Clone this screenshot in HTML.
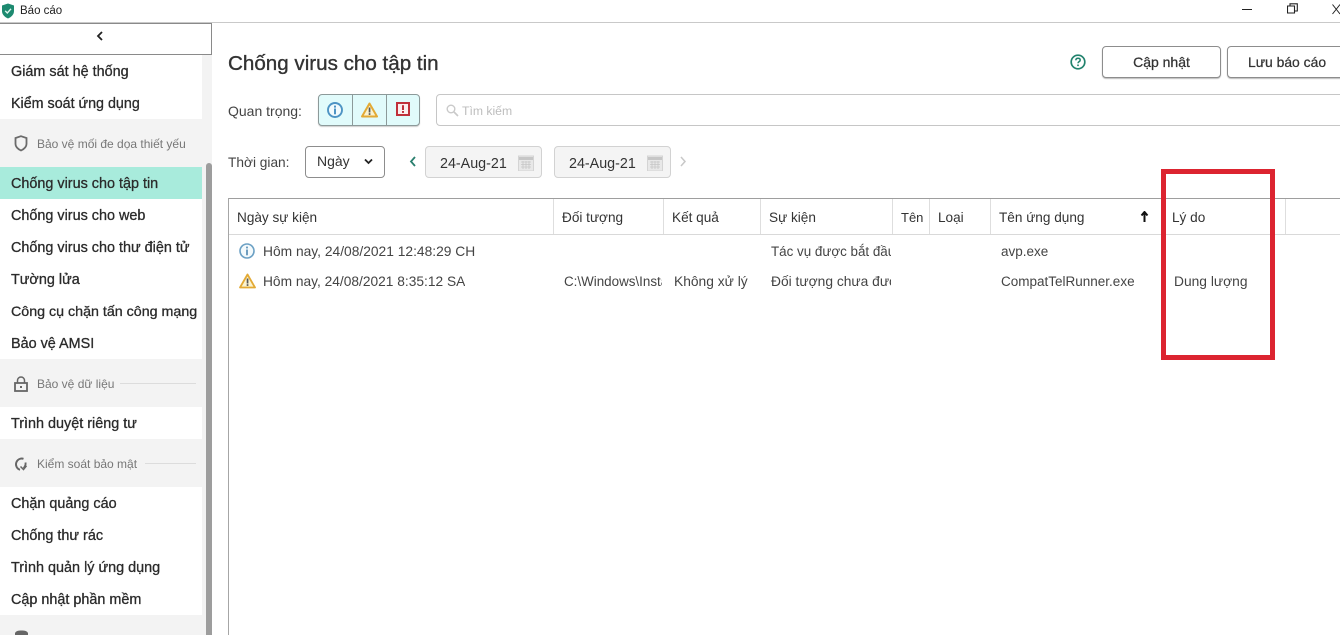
<!DOCTYPE html>
<html lang="vi">
<head>
<meta charset="utf-8">
<title>Báo cáo</title>
<style>
html,body{margin:0;padding:0;background:#fff}
body{width:1340px;height:635px;overflow:hidden;position:relative;font-family:"Liberation Sans","Noto Sans CJK SC",sans-serif;color:#2f2f2f;font-size:13.5px}
.a{position:absolute;box-sizing:border-box}
.t{position:absolute;white-space:nowrap;line-height:18px;height:18px}
.nav{font-size:14.4px;font-weight:400;color:#2b2b2b;left:11px;-webkit-text-stroke:.3px #2b2b2b}
.sec{font-size:12px;color:#777;left:37px}
.bl{background:#fff;left:0;width:202px}
.hd{font-size:13.6px;color:#333;top:209px}
.c{font-size:13.8px;color:#444;overflow:hidden}
.sep{position:absolute;top:199px;width:1px;height:35px;background:#dedede}
.btn{border:1px solid #8d8d8d;border-radius:4px;background:#fff;box-shadow:0 1px 1px #bbb}
.date{border:1px solid #d2d2d2;border-radius:4px;background:#f4f4f4}
svg{position:absolute;display:block}
</style>
</head>
<body>
<!-- title bar -->
<svg style="left:1px;top:3px" width="14" height="16" viewBox="0 0 14 16"><path d="M7 .5 13 2.500V8c0 3.600-2.600 6-6 7.500C3.600 14 1 11.600 1 8V2.500Z" fill="#1d8a70"/><path d="M4.200 7.800 6.300 10 10 5.800" fill="none" stroke="#dff5ee" stroke-width="1.400"/></svg>
<div class="t" style="left:20px;top:2px;font-size:11.5px;color:#222">Báo cáo</div>
<div class="a" style="left:1242px;top:9px;width:10px;height:1px;background:#222"></div>
<svg style="left:1287px;top:3px" width="11" height="11" viewBox="0 0 11 11"><path d="M.5 3h7v7h-7zM3 3V.8h7.300V8H7.500" fill="none" stroke="#222" stroke-width="1.100"/></svg>
<svg style="left:1332px;top:4px" width="8" height="11" viewBox="0 0 8 11"><path d="M.5 .5 8 10M8 .5 .5 10" stroke="#222" fill="none"/></svg>
<div class="a" style="left:0;top:22px;width:1340px;height:1px;background:#c9c9c9"></div>

<!-- sidebar -->
<div class="a" style="left:0;top:23px;width:212px;height:612px;background:#f3f3f3"></div>
<div class="a" style="left:-2px;top:23px;width:214px;height:32px;background:#fff;border:1px solid #8a8a8a"></div>
<svg style="left:96px;top:31px" width="8" height="10" viewBox="0 0 8 10"><path d="M6 1 2 5 6 9" fill="none" stroke="#222" stroke-width="1.800"/></svg>

<div class="a bl" style="top:55px;height:64px"></div>
<div class="t nav" style="top:63px">Giám sát hệ thống</div>
<div class="t nav" style="top:95px;font-size:14.3px">Kiểm soát ứng dụng</div>

<svg style="left:14px;top:135px" width="14" height="17" viewBox="0 0 14 17"><path d="M7 1.200 12.500 3V9c0 3-2.400 5-5.500 6.500C3.900 14 1.500 12 1.500 9V3Z" fill="none" stroke="#6b6b6b" stroke-width="1.800"/></svg>
<div class="t sec" style="top:135px">Bảo vệ mối đe dọa thiết yếu</div>

<div class="a" style="left:0;top:167px;width:202px;height:32px;background:#a8ebdc"></div>
<div class="a bl" style="top:199px;height:160px"></div>
<div class="t nav" style="top:175px">Chống virus cho tập tin</div>
<div class="t nav" style="top:207px">Chống virus cho web</div>
<div class="t nav" style="top:239px">Chống virus cho thư điện tử</div>
<div class="t nav" style="top:271px">Tường lửa</div>
<div class="t nav" style="top:303px;font-size:14.25px">Công cụ chặn tấn công mạng</div>
<div class="t nav" style="top:335px">Bảo vệ AMSI</div>

<svg style="left:13px;top:376px" width="16" height="16" viewBox="0 0 16 16"><path d="M4.500 7V4.500a3.500 3.500 0 0 1 7 0V7" fill="none" stroke="#666" stroke-width="1.500"/><rect x="2" y="7" width="12" height="8" fill="none" stroke="#666" stroke-width="1.800"/><rect x="7" y="10" width="2" height="2" fill="#666"/></svg>
<div class="t sec" style="top:375px">Bảo vệ dữ liệu</div>
<div class="a" style="left:120px;top:383px;width:76px;height:1px;background:#dcdcdc"></div>

<div class="a bl" style="top:407px;height:32px"></div>
<div class="t nav" style="top:415px">Trình duyệt riêng tư</div>

<svg style="left:13px;top:456px" width="15" height="16" viewBox="0 0 15 16"><path d="M10.500 2.800A5.600 5.600 0 1 0 7 13.800M12.500 6.500c.4 2.300-.4 4.200-2 5.600" fill="none" stroke="#666" stroke-width="1.900"/><path d="M7.500 10.500 10.500 13.500 13.500 9.800" fill="none" stroke="#666" stroke-width="1.500"/></svg>
<div class="t sec" style="top:455px">Kiểm soát bảo mật</div>
<div class="a" style="left:145px;top:463px;width:51px;height:1px;background:#dcdcdc"></div>

<div class="a bl" style="top:487px;height:128px"></div>
<div class="t nav" style="top:495px">Chặn quảng cáo</div>
<div class="t nav" style="top:527px">Chống thư rác</div>
<div class="t nav" style="top:559px">Trình quản lý ứng dụng</div>
<div class="t nav" style="top:591px">Cập nhật phần mềm</div>
<svg style="left:14px;top:630px" width="15" height="5" viewBox="0 0 15 5"><path d="M1 5V3c1-2 3-2.500 6.500-2.500S13 1 14 3v2Z" fill="#666"/></svg>

<div class="a" style="left:206px;top:163px;width:6px;height:472px;background:#9d9d9d;border-radius:3px 3px 0 0"></div>

<!-- heading -->
<div class="t" style="left:228px;top:52px;font-size:20.6px;height:24px;line-height:24px;color:#333;-webkit-text-stroke:.35px #333">Chống virus cho tập tin</div>
<svg style="left:1070px;top:54px" width="16" height="16" viewBox="0 0 16 16"><circle cx="8" cy="8" r="6.800" fill="none" stroke="#21826d" stroke-width="1.700"/><path d="M5.800 6.300C5.900 4.800 6.800 4.300 8 4.300c1.300 0 2.200.7 2.200 1.800 0 1.600-2.200 1.500-2.200 3.200" fill="none" stroke="#21826d" stroke-width="1.500"/><rect x="7.200" y="10.500" width="1.600" height="1.600" fill="#21826d"/></svg>
<div class="a btn" style="left:1102px;top:46px;width:119px;height:32px"></div>
<div class="t" style="left:1102px;width:119px;text-align:center;top:53px;font-size:14px;color:#333;-webkit-text-stroke:.25px #333">Cập nhật</div>
<div class="a btn" style="left:1227px;top:46px;width:120px;height:32px"></div>
<div class="t" style="left:1248px;top:53px;font-size:13.9px;color:#333;-webkit-text-stroke:.25px #333">Lưu báo cáo</div>

<!-- filter row -->
<div class="t" style="left:228px;top:102px;font-size:14px;color:#444">Quan trọng:</div>
<div class="a" style="left:318px;top:94px;width:102px;height:32px;border:1px solid #8c9a9a;border-radius:4px;background:#e1fbfb;box-shadow:0 1px 1px #ccc"></div>
<div class="a" style="left:352px;top:95px;width:1px;height:30px;background:#8c9a9a"></div>
<div class="a" style="left:386px;top:95px;width:1px;height:30px;background:#8c9a9a"></div>
<svg style="left:327px;top:102px" width="16" height="16" viewBox="0 0 16 16"><circle cx="8" cy="8" r="7" fill="#f2fbfd" stroke="#4e94c4" stroke-width="1.900"/><rect x="7" y="3.600" width="2" height="2" fill="#4e94c4"/><rect x="7" y="6.500" width="2" height="5.800" fill="#4e94c4"/></svg>
<svg style="left:361px;top:102px" width="17" height="16" viewBox="0 0 17 16"><path d="M8.500 1.500 16 14.500H1Z" fill="#fbf3cf" stroke="#e3aa35" stroke-width="2" stroke-linejoin="round"/><rect x="7.700" y="5.500" width="1.700" height="5" fill="#555"/><rect x="7.700" y="11.200" width="1.700" height="1.700" fill="#555"/></svg>
<svg style="left:396px;top:102px" width="14" height="14" viewBox="0 0 14 14"><rect x="1" y="1" width="12" height="12" fill="#fbeeee" stroke="#c0303a" stroke-width="2"/><rect x="6" y="3.200" width="2" height="4.800" fill="#c0303a"/><rect x="6" y="9" width="2" height="1.900" fill="#c0303a"/></svg>

<div class="a" style="left:436px;top:94px;width:910px;height:32px;border:1px solid #c6c6c6;border-radius:4px;background:#fff"></div>
<svg style="left:446px;top:104px" width="13" height="13" viewBox="0 0 13 13"><circle cx="5" cy="5" r="3.800" fill="none" stroke="#c9c9c9" stroke-width="1.400"/><path d="M8 8 12 12" stroke="#c9c9c9" stroke-width="1.600"/></svg>
<div class="t" style="left:462px;top:102px;font-size:12.2px;color:#bdbdbd">Tìm kiếm</div>

<!-- time row -->
<div class="t" style="left:228px;top:154px;font-size:13.7px;color:#444">Thời gian:</div>
<div class="a" style="left:305px;top:146px;width:80px;height:32px;border:1px solid #8d8d8d;border-radius:4px;background:#fff"></div>
<div class="t" style="left:317px;top:152px;font-size:14px;color:#333">Ngày</div>
<svg style="left:364px;top:158px" width="9" height="7" viewBox="0 0 9 7"><path d="M1 1.500 4.500 5 8 1.500" fill="none" stroke="#222" stroke-width="1.800"/></svg>
<svg style="left:409px;top:156px" width="8" height="11" viewBox="0 0 8 11"><path d="M6 1 2 5.500 6 10" fill="none" stroke="#2a7f6e" stroke-width="1.800"/></svg>
<div class="a date" style="left:425px;top:146px;width:117px;height:32px"></div>
<div class="t" style="left:440px;top:155px;font-size:14.3px;color:#333">24-Aug-21</div>
<div class="a date" style="left:554px;top:146px;width:117px;height:32px"></div>
<div class="t" style="left:569px;top:155px;font-size:14.3px;color:#333">24-Aug-21</div>
<svg style="left:518px;top:155px" width="16" height="16" viewBox="0 0 16 16"><rect x="0.500" y="1" width="15" height="15" fill="#e8e8e8" stroke="#d4d4d4"/><rect x="1" y="2" width="14" height="3" fill="#c6c6c6"/><path d="M3 7h10M3 9.500h10M3 12h10M5 6v8M8 6v8M11 6v8" stroke="#c6c6c6" stroke-width=".8"/></svg>
<svg style="left:647px;top:155px" width="16" height="16" viewBox="0 0 16 16"><rect x="0.500" y="1" width="15" height="15" fill="#e8e8e8" stroke="#d4d4d4"/><rect x="1" y="2" width="14" height="3" fill="#c6c6c6"/><path d="M3 7h10M3 9.500h10M3 12h10M5 6v8M8 6v8M11 6v8" stroke="#c6c6c6" stroke-width=".8"/></svg>
<svg style="left:679px;top:156px" width="8" height="11" viewBox="0 0 8 11"><path d="M2 1 6 5.500 2 10" fill="none" stroke="#c8c8c8" stroke-width="1.500"/></svg>

<!-- table -->
<div class="a" style="left:228px;top:198px;width:1112px;height:1px;background:#9e9e9e"></div>
<div class="a" style="left:228px;top:198px;width:1px;height:437px;background:#a6a6a6"></div>
<div class="a" style="left:229px;top:234px;width:1111px;height:1px;background:#d9d9d9"></div>
<div class="sep" style="left:553px"></div>
<div class="sep" style="left:663px"></div>
<div class="sep" style="left:760px"></div>
<div class="sep" style="left:892px"></div>
<div class="sep" style="left:929px"></div>
<div class="sep" style="left:990px"></div>
<div class="sep" style="left:1285px"></div>

<div class="t hd" style="left:237px">Ngày sự kiện</div>
<div class="t hd" style="left:562px">Đối tượng</div>
<div class="t hd" style="left:672px">Kết quả</div>
<div class="t hd" style="left:769px">Sự kiện</div>
<div class="t hd" style="left:901px;font-size:13px">Tên</div>
<div class="t hd" style="left:938px">Loại</div>
<div class="t hd" style="left:999px">Tên ứng dụng</div>
<svg style="left:1140px;top:211px" width="9" height="11" viewBox="0 0 9 11"><path d="M4.500 1V11M1.500 4.500 4.500 1 7.500 4.500" fill="none" stroke="#111" stroke-width="2"/></svg>
<div class="t hd" style="left:1172px">Lý do</div>

<svg style="left:239px;top:243px" width="16" height="16" viewBox="0 0 16 16"><circle cx="8" cy="8" r="7" fill="#f4fafc" stroke="#6ba0c4" stroke-width="1.600"/><rect x="7.100" y="3.600" width="1.800" height="1.800" fill="#5f93b8"/><rect x="7.100" y="6.500" width="1.800" height="5.800" fill="#5f93b8"/></svg>
<svg style="left:239px;top:273px" width="17" height="16" viewBox="0 0 17 16"><path d="M8.500 1.500 16 14.500H1Z" fill="#fbf3cf" stroke="#e3aa35" stroke-width="1.800" stroke-linejoin="round"/><rect x="7.700" y="5.500" width="1.700" height="5" fill="#555"/><rect x="7.700" y="11.200" width="1.700" height="1.700" fill="#555"/></svg>

<div class="t c" style="left:263px;top:243px">Hôm nay, 24/08/2021 12:48:29 CH</div>
<div class="t c" style="left:771px;top:243px;width:120px;font-size:13.4px">Tác vụ được bắt đầu</div>
<div class="t c" style="left:1001px;top:243px;font-size:13.5px">avp.exe</div>
<div class="t c" style="left:263px;top:273px;font-size:13.75px">Hôm nay, 24/08/2021 8:35:12 SA</div>
<div class="t c" style="left:564px;top:273px;width:98px;font-size:13.4px">C:\Windows\Installer</div>
<div class="t c" style="left:674px;top:273px">Không xử lý</div>
<div class="t c" style="left:771px;top:273px;width:120px">Đối tượng chưa được</div>
<div class="t c" style="left:1001px;top:273px;font-size:13.5px">CompatTelRunner.exe</div>
<div class="t c" style="left:1174px;top:273px">Dung lượng</div>

<!-- red annotation -->
<div class="a" style="left:1161px;top:169px;width:114px;height:191px;border:5px solid #dc2430"></div>
</body>
</html>
